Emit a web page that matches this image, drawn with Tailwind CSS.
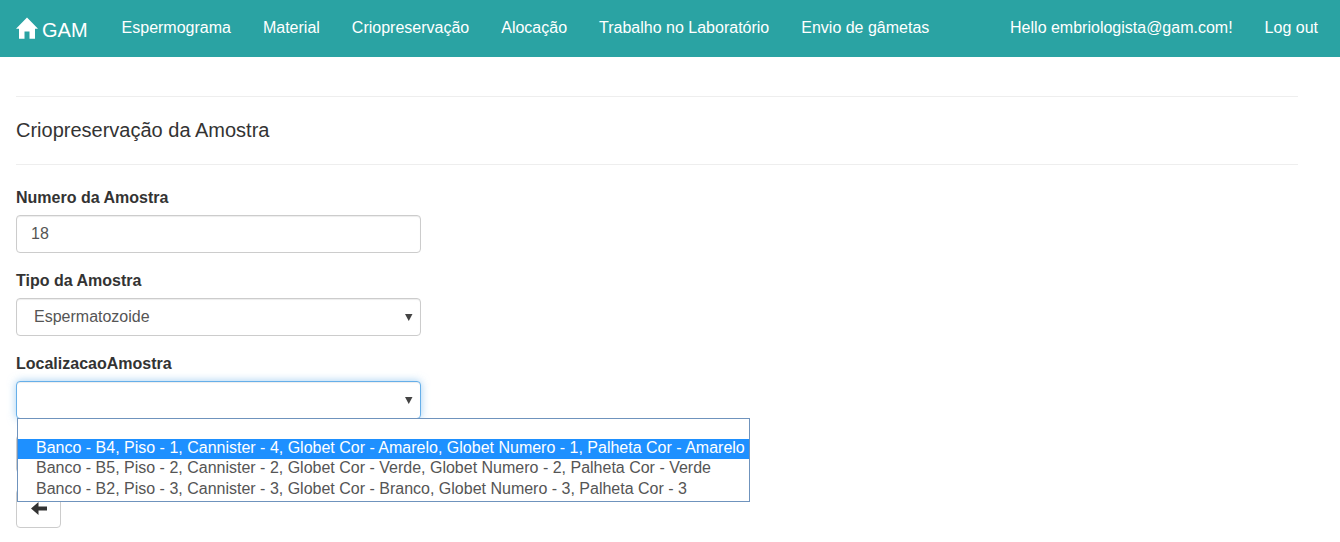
<!DOCTYPE html>
<html lang="pt">
<head>
<meta charset="utf-8">
<meta name="viewport" content="width=device-width, initial-scale=1">
<title>Criopreservação da Amostra - GAM</title>
<script src="https://cdn.jsdelivr.net/npm/@tailwindcss/browser@4"></script>
</head>
<body class="bg-white font-['Liberation_Sans',Arial,sans-serif] text-base text-[#333333]">
<nav class="flex min-h-[57px] items-center justify-between bg-[#2aa3a3] pr-[22px] pb-0.5 pl-4 whitespace-nowrap text-white">
  <div class="flex items-center gap-[34px]">
    <a href="#" class="flex items-center gap-1 text-xl">
      <svg class="h-[22px] w-[22px]" viewBox="0 0 22 22" fill="currentColor" aria-hidden="true"><path d="M11 0.5 L22 11.8 H19 V21.8 H13.5 V14.5 H8.5 V21.8 H3 V11.8 H0 Z"/></svg>
      <span class="pt-1">GAM</span>
    </a>
    <div class="flex items-center gap-8">
      <a href="#">Espermograma</a>
      <a href="#">Material</a>
      <a href="#">Criopreservação</a>
      <a href="#">Alocação</a>
      <a href="#">Trabalho no Laboratório</a>
      <a href="#">Envio de gâmetas</a>
    </div>
  </div>
  <div class="flex items-center gap-8">
    <a href="#">Hello embriologista@gam.com!</a>
    <a href="#">Log out</a>
  </div>
</nav>
<main class="pt-[39px] pr-[42px] pb-3 pl-4">
  <h1 class="border-y border-[#eeeeee] pt-[19px] pb-5 text-xl">Criopreservação da Amostra</h1>
  <form class="mt-[21px] flex max-w-[405px] flex-col items-start gap-4">
    <div class="w-full">
      <label for="numero" class="mb-[5px] block font-bold">Numero da Amostra</label>
      <input id="numero" type="text" value="18" class="block h-[38px] w-full rounded border border-[#cccccc] px-3.5 text-[#555555] shadow-[inset_0_1px_1px_rgba(0,0,0,0.075)]">
    </div>
    <div class="w-full">
      <label for="tipo" class="mb-[5px] block font-bold">Tipo da Amostra</label>
      <div class="relative">
        <select id="tipo" class="block h-[38px] w-full appearance-none rounded border border-[#cccccc] bg-white pr-8 pl-[17px] text-[#555555] shadow-[inset_0_1px_1px_rgba(0,0,0,0.075)]">
          <option>Espermatozoide</option>
        </select>
        <svg class="pointer-events-none absolute top-4 right-2 h-[7px] w-2" viewBox="0 0 8 7" fill="#444444" aria-hidden="true"><path d="M0 0 H7.5 L3.75 7 Z"/></svg>
      </div>
    </div>
    <div class="w-full">
      <label for="localizacao" class="mb-[5px] block font-bold">LocalizacaoAmostra</label>
      <div class="relative">
        <select id="localizacao" class="block h-[38px] w-full appearance-none rounded border border-[#66afe9] bg-white pr-8 pl-[17px] text-[#555555] shadow-[inset_0_1px_1px_rgba(0,0,0,0.075),0_0_8px_rgba(102,175,233,0.6)]">
          <option></option>
        </select>
        <svg class="pointer-events-none absolute top-4 right-2 h-[7px] w-2" viewBox="0 0 8 7" fill="#444444" aria-hidden="true"><path d="M0 0 H7.5 L3.75 7 Z"/></svg>
        <ul role="listbox" aria-label="LocalizacaoAmostra" class="absolute top-[37px] left-px z-10 w-max border border-[#6f93bd] bg-white leading-5 whitespace-nowrap text-[#555555]">
          <li role="option" class="h-5"></li>
          <li role="option" aria-selected="true" class="h-5 bg-[#1e90ff] pr-1 pl-[18px] leading-[18px] text-white">Banco - B4, Piso - 1, Cannister - 4, Globet Cor - Amarelo, Globet Numero - 1, Palheta Cor - Amarelo</li>
          <li role="option" class="h-[21px] pr-1 pl-[18px] leading-[18px]">Banco - B5, Piso - 2, Cannister - 2, Globet Cor - Verde, Globet Numero - 2, Palheta Cor - Verde</li>
          <li role="option" class="h-[21px] pr-1 pl-[18px] leading-[18px]">Banco - B2, Piso - 3, Cannister - 3, Globet Cor - Branco, Globet Numero - 3, Palheta Cor - 3</li>
        </ul>
      </div>
    </div>
    <button type="submit" aria-label="Guardar" class="h-[38px] w-[45px] rounded border border-[#cccccc] bg-white"></button>
    <button type="button" aria-label="Voltar" class="flex h-[39px] w-[45px] items-center justify-center rounded border border-[#cccccc] bg-white">
      <svg class="h-[13px] w-4" viewBox="0 0 16 13" fill="#333333" aria-hidden="true"><path d="M0 6.5 L7.5 0 V4.5 H16 V8.5 H7.5 V13 Z"/></svg>
    </button>
  </form>
</main>
</body>
</html>
